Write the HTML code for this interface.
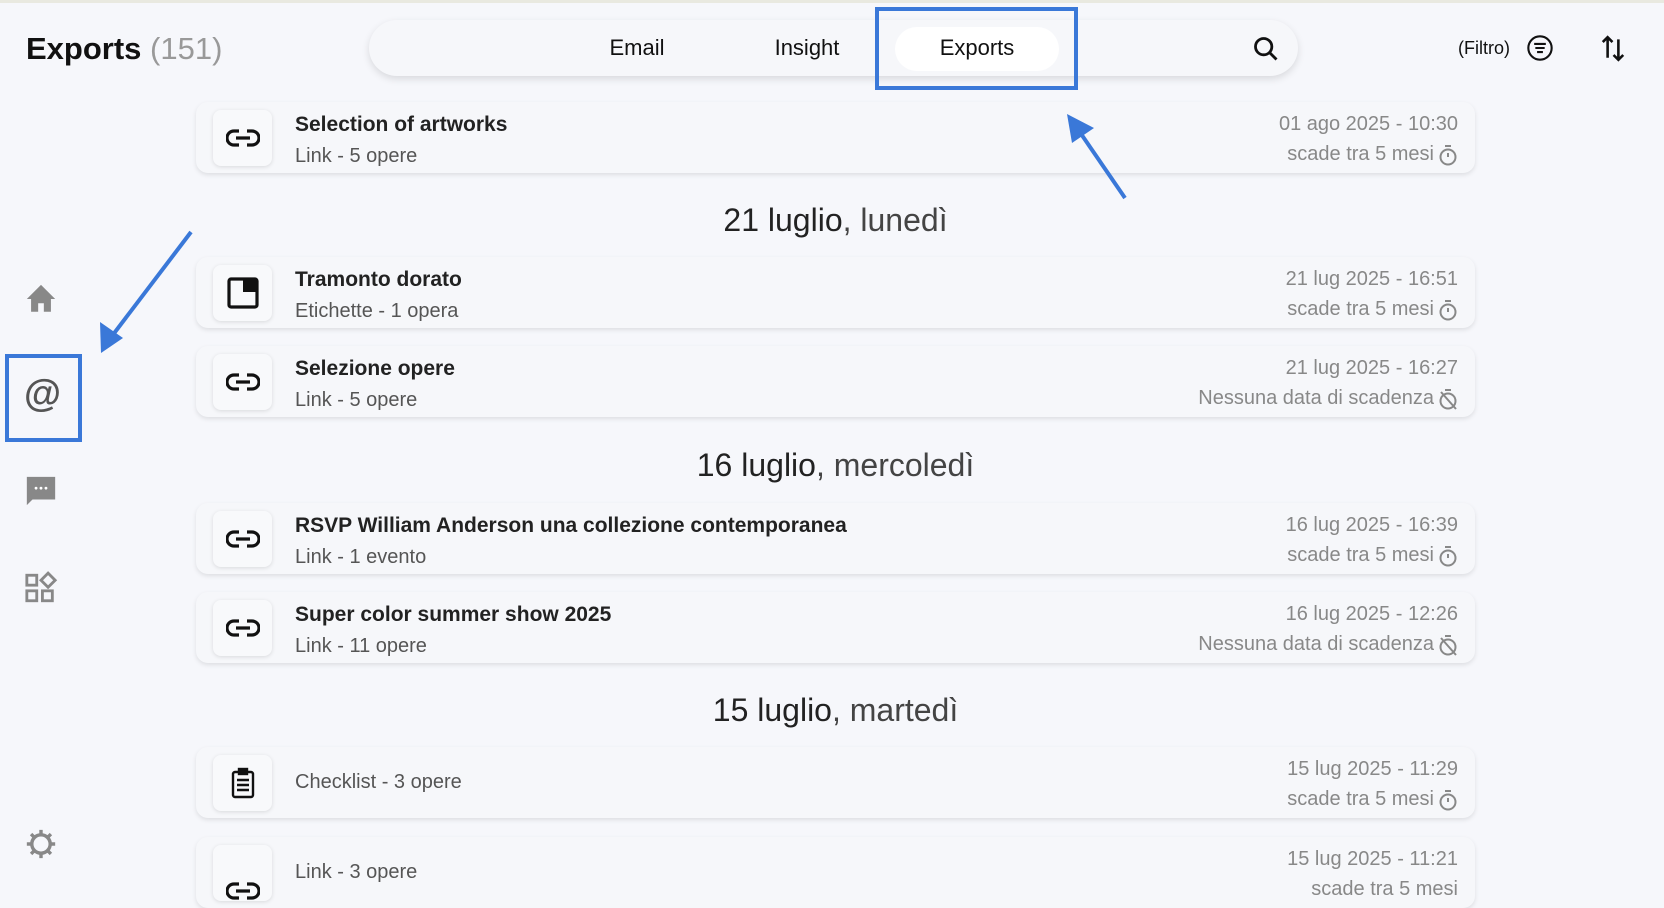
<!DOCTYPE html>
<html><head><meta charset="utf-8"><style>
*{margin:0;padding:0;box-sizing:border-box}
body{width:1664px;height:882px;overflow:hidden;background:#f6f7fb;font-family:"Liberation Sans",sans-serif;position:relative;color:#1a1a1a}
.topline{position:absolute;left:0;top:0;width:1664px;height:3px;background:#e9e9e0}
.title{position:absolute;left:26px;top:31px;font-size:31px;font-weight:600;color:#111}
.title span{font-weight:300;color:#999}
.nav{position:absolute;left:369px;top:20px;width:929px;height:56px;border-radius:28px;background:#f6f7fa;box-shadow:0 3px 8px rgba(0,0,0,.12)}
.tab{position:absolute;top:0;height:56px;line-height:56px;font-size:22px;color:#111;transform:translateX(-50%)}
.pill{position:absolute;left:526px;top:7px;width:164px;height:44px;border-radius:22px;background:#fff}
.box{position:absolute;border:4px solid #3a78d8}
.card{position:absolute;left:196px;width:1279px;height:71px;background:#f6f7fa;border-radius:12px;box-shadow:0 2px 5px rgba(0,0,0,.1)}
.ic{position:absolute;left:17px;top:8px;width:59px;height:56px;border-radius:8px;background:#f8f9fb;box-shadow:0 1px 4px rgba(0,0,0,.12);display:flex;align-items:center;justify-content:center}
.t1{position:absolute;left:99px;top:11px;font-size:21px;font-weight:600;color:#222}
.t2{position:absolute;left:99px;top:43px;font-size:20px;color:#555;font-weight:300}
.r1,.r2{position:absolute;right:17px;font-size:20px;color:#888;text-align:right;white-space:nowrap}
.r1{top:11px;right:17px}
.r2{top:41px;right:17px;display:flex;align-items:center;gap:4px}
.hd{position:absolute;left:196px;width:1279px;text-align:center;font-size:32px;color:#222}
.hd span{font-weight:300;color:#444}
.side{position:absolute;left:24px}
</style></head><body>
<div class="topline"></div>
<div class="title">Exports <span>(151)</span></div>

<div class="nav">
  <div class="pill"></div>
  <div class="tab" style="left:268px">Email</div>
  <div class="tab" style="left:438px">Insight</div>
  <div class="tab" style="left:608px">Exports</div>
  <svg style="position:absolute;left:883px;top:15px" width="28" height="28" viewBox="0 0 24 24" fill="none" stroke="#111" stroke-width="2.4"><circle cx="10" cy="10" r="7"/><path d="M15 15l6 6"/></svg>
</div>
<div class="box" style="left:875px;top:7px;width:203px;height:83px"></div>

<div style="position:absolute;left:1458px;top:38px;font-size:18px;color:#111">(Filtro)</div>
<svg style="position:absolute;left:1526px;top:34px" width="28" height="28" viewBox="0 0 24 24" fill="none" stroke="#111" stroke-width="1.8"><circle cx="12" cy="12" r="10"/><path d="M7 8.5h10M8 12h8M9.5 15.5h5"/></svg>
<svg style="position:absolute;left:1600px;top:34px" width="26" height="28" viewBox="0 0 24 26" fill="none" stroke="#111" stroke-width="2.4"><path d="M7 22V3M2.5 7.5L7 3l4.5 4.5M17 5v19M12.5 19.5L17 24l4.5-4.5"/></svg>

<!-- sidebar -->
<svg class="side" style="top:282px" width="34" height="34" viewBox="0 0 24 24" fill="#888"><path d="M12 2L2 12h3v9h5v-6h4v6h5v-9h3z"/></svg>
<div class="box" style="left:5px;top:354px;width:77px;height:88px"></div>
<div style="position:absolute;left:24px;top:373px;font-size:38px;color:#555;font-weight:bold">@</div>
<svg class="side" style="top:474px" width="34" height="34" viewBox="0 0 24 24" fill="#888"><path d="M2 2h20v16H6l-4 4z"/><circle cx="8.5" cy="10" r="1" fill="#fff"/><circle cx="12" cy="10" r="1" fill="#fff"/><circle cx="15.5" cy="10" r="1" fill="#fff"/></svg>
<svg class="side" style="top:571px" width="34" height="34" viewBox="0 0 24 24" fill="none" stroke="#888" stroke-width="2"><rect x="2" y="3" width="7" height="7"/><path d="M17 1.5l5 5-5 5-5-5z"/><rect x="2" y="14" width="7" height="7"/><rect x="13" y="14" width="7" height="7"/></svg>
<svg class="side" style="top:827px" width="34" height="34" viewBox="0 0 24 24" fill="none" stroke="#888" stroke-width="2.4"><circle cx="12" cy="12" r="6.5"/><path d="M12 2v3M12 19v3M2 12h3M19 12h3M5 5l2 2M17 17l2 2M5 19l2-2M17 7l2-2"/></svg>

<div class="card" style="top:102px"><div class="ic"><svg width="34" height="20" viewBox="0 0 34 20" fill="none" stroke="#111" stroke-width="3.2"><path d="M13 3H8a7 7 0 0 0 0 14h5M21 3h5a7 7 0 0 1 0 14h-5M10 10h14"/></svg></div>
<div class="t1">Selection of artworks</div><div class="t2">Link - 5 opere</div>
<div class="r1">01 ago 2025 - 10:30</div><div class="r2">scade tra 5 mesi <svg width="20" height="22" viewBox="0 0 20 22" fill="none" stroke="#888" stroke-width="2"><circle cx="10" cy="13" r="7.5"/><path d="M7 2h6M10 9v4"/></svg></div></div>

<div class="hd" style="top:202px">21 luglio<span>, lunedì</span></div>

<div class="card" style="top:257px"><div class="ic"><svg width="32" height="32" viewBox="0 0 32 32"><rect x="2" y="2" width="28" height="28" rx="2" fill="none" stroke="#111" stroke-width="3.2"/><rect x="16" y="2" width="14" height="13" fill="#111"/></svg></div>
<div class="t1">Tramonto dorato</div><div class="t2">Etichette - 1 opera</div>
<div class="r1">21 lug 2025 - 16:51</div><div class="r2">scade tra 5 mesi <svg width="20" height="22" viewBox="0 0 20 22" fill="none" stroke="#888" stroke-width="2"><circle cx="10" cy="13" r="7.5"/><path d="M7 2h6M10 9v4"/></svg></div></div>

<div class="card" style="top:346px"><div class="ic"><svg width="34" height="20" viewBox="0 0 34 20" fill="none" stroke="#111" stroke-width="3.2"><path d="M13 3H8a7 7 0 0 0 0 14h5M21 3h5a7 7 0 0 1 0 14h-5M10 10h14"/></svg></div>
<div class="t1">Selezione opere</div><div class="t2">Link - 5 opere</div>
<div class="r1">21 lug 2025 - 16:27</div><div class="r2">Nessuna data di scadenza <svg width="20" height="22" viewBox="0 0 20 22" fill="none" stroke="#888" stroke-width="2"><circle cx="10" cy="13" r="7.5"/><path d="M7 2h6M3 4l15 17"/></svg></div></div>

<div class="hd" style="top:447px">16 luglio<span>, mercoledì</span></div>

<div class="card" style="top:503px"><div class="ic"><svg width="34" height="20" viewBox="0 0 34 20" fill="none" stroke="#111" stroke-width="3.2"><path d="M13 3H8a7 7 0 0 0 0 14h5M21 3h5a7 7 0 0 1 0 14h-5M10 10h14"/></svg></div>
<div class="t1">RSVP William Anderson una collezione contemporanea</div><div class="t2">Link - 1 evento</div>
<div class="r1">16 lug 2025 - 16:39</div><div class="r2">scade tra 5 mesi <svg width="20" height="22" viewBox="0 0 20 22" fill="none" stroke="#888" stroke-width="2"><circle cx="10" cy="13" r="7.5"/><path d="M7 2h6M10 9v4"/></svg></div></div>

<div class="card" style="top:592px"><div class="ic"><svg width="34" height="20" viewBox="0 0 34 20" fill="none" stroke="#111" stroke-width="3.2"><path d="M13 3H8a7 7 0 0 0 0 14h5M21 3h5a7 7 0 0 1 0 14h-5M10 10h14"/></svg></div>
<div class="t1">Super color summer show 2025</div><div class="t2">Link - 11 opere</div>
<div class="r1">16 lug 2025 - 12:26</div><div class="r2">Nessuna data di scadenza <svg width="20" height="22" viewBox="0 0 20 22" fill="none" stroke="#888" stroke-width="2"><circle cx="10" cy="13" r="7.5"/><path d="M7 2h6M3 4l15 17"/></svg></div></div>

<div class="hd" style="top:692px">15 luglio<span>, martedì</span></div>

<div class="card" style="top:747px"><div class="ic"><svg width="24" height="32" viewBox="0 0 24 32" fill="none" stroke="#111" stroke-width="2.4"><rect x="2" y="5" width="20" height="25" rx="2"/><rect x="8" y="2" width="8" height="5" fill="#111"/><path d="M6 13h12M6 18h12M6 23h12"/></svg></div>
<div class="t2" style="top:24px">Checklist - 3 opere</div>
<div class="r1">15 lug 2025 - 11:29</div><div class="r2">scade tra 5 mesi <svg width="20" height="22" viewBox="0 0 20 22" fill="none" stroke="#888" stroke-width="2"><circle cx="10" cy="13" r="7.5"/><path d="M7 2h6M10 9v4"/></svg></div></div>

<div class="card" style="top:837px"><div class="ic" style="align-items:flex-end"><svg width="34" height="20" viewBox="0 0 34 20" fill="none" stroke="#111" stroke-width="3.2" style="margin-top:30px"><path d="M13 3H8a7 7 0 0 0 0 14h5M21 3h5a7 7 0 0 1 0 14h-5M10 10h14"/></svg></div>
<div class="t2" style="top:24px">Link - 3 opere</div>
<div class="r1">15 lug 2025 - 11:21</div><div class="r2">scade tra 5 mesi</div></div>

<!-- arrows on top -->
<svg style="position:absolute;left:0;top:0" width="1664" height="882">
<g stroke="#3a78d8" stroke-width="4" fill="#3a78d8">
<line x1="191" y1="232" x2="112" y2="336"/>
<polygon points="101,353 100,322 123,338" stroke="none"/>
<line x1="1125" y1="198" x2="1077" y2="128"/>
<polygon points="1067,114 1094,128 1072,143" stroke="none"/>
</g></svg>
</body></html>
